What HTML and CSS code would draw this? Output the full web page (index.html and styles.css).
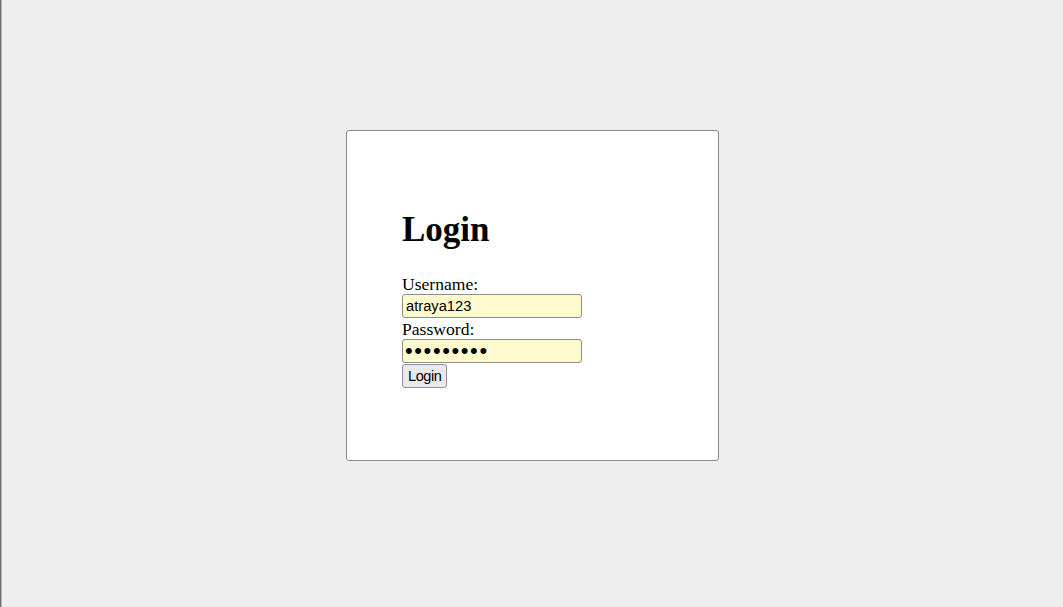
FILE: index.html
```html
<!DOCTYPE html>
<html>
<head>
<meta charset="utf-8">
<title>Login</title>
<link rel="stylesheet" href="styles.css">
</head>
<body>
<div class="page">
  <div class="card">
    <h1 class="title">Login</h1>
    <form class="form">
      <label class="label" for="u">Username:</label>
      <input class="field" id="u" type="text" value="atraya123">
      <label class="label" for="p">Password:</label>
      <input class="field field-pass" id="p" type="password" value="secretpwd">
      <button class="btn" type="button">Login</button>
    </form>
  </div>
</div>
</body>
</html>
```
FILE: styles.css
```css
html, body {
  margin: 0;
  padding: 0;
}
body {
  background: #eeeeee;
  font-family: "Liberation Serif", "Times New Roman", serif;
  color: #000;
}
.page {
  min-height: 607px;
  box-sizing: border-box;
  box-shadow: inset 1px 0 0 #6e6e6e, inset 2px 0 0 #b4b4b4;
  display: flex;
  justify-content: center;
  align-items: flex-start;
  padding-top: 130px;
}
.card {
  width: 261px;
  padding: 55px;
  margin-left: 2px;
  background: #ffffff;
  border: 1px solid #8a8a8a;
  border-radius: 3px;
}
.title {
  font-size: 35px;
  font-weight: bold;
  line-height: 40px;
  margin: 23.5px 0 24.5px 0;
}
.form {
  display: flex;
  flex-direction: column;
  align-items: flex-start;
  margin: 0 0 16.5px 0;
}
.label {
  font-size: 17.6px;
  line-height: 20px;
  height: 20px;
}
.field {
  box-sizing: border-box;
  width: 180px;
  height: 24px;
  margin: 0 0 1px 0;
  padding: 1px 3px;
  background: #fffacd;
  border: 1px solid #8f8f8f;
  border-radius: 3px;
  font-family: "Liberation Sans", Arial, sans-serif;
  font-size: 14.7px;
  color: #000;
  outline: none;
}
.field-pass {
  font-size: 22px;
  letter-spacing: 1.6px;
  padding: 0 2px;
}
.btn {
  box-sizing: border-box;
  height: 24px;
  padding: 1px 5px;
  margin: 0;
  font-family: "Liberation Sans", Arial, sans-serif;
  font-size: 14.5px;
  letter-spacing: -0.4px;
  color: #000;
  background: #e9e9ed;
  border: 1px solid #8f8f9d;
  border-radius: 3px;
}
```
